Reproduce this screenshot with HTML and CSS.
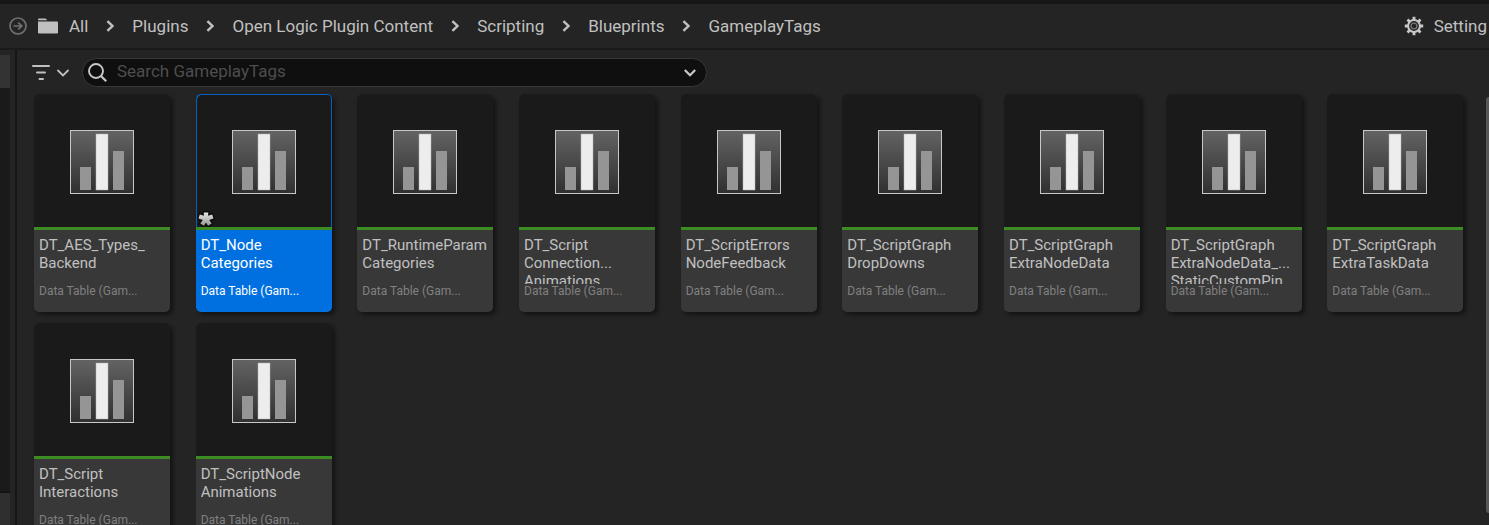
FILE: index.html
```html
<!DOCTYPE html>
<html lang="en">
<head>
<meta charset="utf-8">
<title>Content Browser</title>
<link rel="stylesheet" href="styles.css">
</head>
<body>
<svg class="defs" width="0" height="0" aria-hidden="true">
  <defs>
    <linearGradient id="plate" x1="0" y1="0" x2="0" y2="1">
      <stop offset="0" stop-color="#636363"/><stop offset="1" stop-color="#303030"/>
    </linearGradient>
    <linearGradient id="star" x1="0" y1="0" x2="0" y2="1">
      <stop offset="0" stop-color="#e6e6e6"/><stop offset="1" stop-color="#979797"/>
    </linearGradient>
    <symbol id="table" viewBox="0 0 64 64">
      <rect x=".5" y=".5" width="63" height="63" fill="url(#plate)" stroke="#c8c8c8"/>
      <rect x="10" y="37" width="11" height="23" fill="#959595"/>
      <rect x="26" y="4" width="12" height="56" fill="#ededed" stroke="#b5b5b5" stroke-width=".5"/>
      <rect x="43" y="21" width="11" height="39" fill="#959595"/>
    </symbol>
    <symbol id="chevron" viewBox="0 0 8 12">
      <path d="M1.4 1.2 6.4 6l-5 4.8" fill="none" stroke="#c0c0c0" stroke-width="2.4"/>
    </symbol>
  </defs>
</svg>
<div class="app">
  <header class="topbar">
    <button class="icon-button" aria-label="Forward">
      <svg width="18" height="18" viewBox="0 0 18 18" fill="none" stroke="#707070" stroke-width="1.7"><circle cx="9" cy="9" r="8"/><path d="M4.500 9h8M9.200 5.600 12.800 9l-3.600 3.400"/></svg>
    </button>
    <svg class="folder" width="20" height="16" viewBox="0 0 20 16" fill="#c0c0c0"><path d="M0 2.200V1.500Q0 .5 1 .5h6.500L9.500 2.200z"/><path d="M0 3.500h19q1 0 1 1V14.500q0 1-1 1H1q-1 0-1-1z"/></svg>
    <nav class="crumbs" aria-label="Path">
      <a href="#">All</a>
      <svg class="sep" width="8" height="12"><use href="#chevron"/></svg>
      <a href="#">Plugins</a>
      <svg class="sep" width="8" height="12"><use href="#chevron"/></svg>
      <a href="#">Open Logic Plugin Content</a>
      <svg class="sep" width="8" height="12"><use href="#chevron"/></svg>
      <a href="#">Scripting</a>
      <svg class="sep" width="8" height="12"><use href="#chevron"/></svg>
      <a href="#">Blueprints</a>
      <svg class="sep" width="8" height="12"><use href="#chevron"/></svg>
      <a href="#">GameplayTags</a>
    </nav>
    <button class="settings">
      <svg width="20" height="20" viewBox="0 0 20 20" fill="none" stroke="#c8c8c8"><circle cx="10" cy="10" r="5.900" stroke-width="2"/><circle cx="10" cy="10" r="2.900" stroke="#777" stroke-width="1.300"/><path stroke-width="2.800" d="M10 .8v3.400M10 15.800v3.400M.8 10h3.400M15.800 10h3.400M3.500 3.500l2.200 2.200M14.300 14.300l2.200 2.200M3.500 16.500l2.200-2.200M14.300 5.700l2.200-2.200"/></svg>
      <span>Setting</span>
    </button>
  </header>
  <div class="body">
    <aside class="side"><div class="side-head"></div><div class="side-list"></div><div class="side-foot"></div></aside>
    <main class="content">
      <div class="toolbar">
        <button class="icon-button filter" aria-label="Filters">
          <svg width="37" height="16" viewBox="0 0 37 16" fill="none" stroke="#c0c0c0" stroke-width="2" stroke-linecap="round"><path d="M1 1h16M5 7.500h8M7.500 14h3.500"/><path d="m26 5.500 5 5 5-5" stroke-width="1.800"/></svg>
        </button>
        <div class="search">
          <svg width="19" height="19" viewBox="0 0 19 19" fill="none" stroke="#c8c8c8" stroke-width="1.900"><circle cx="8" cy="8" r="7"/><path d="m13 13 5.200 5.200" stroke-width="2.200"/></svg>
          <input type="text" placeholder="Search GameplayTags" aria-label="Search GameplayTags">
          <button class="icon-button" aria-label="Search options"><svg width="12" height="8" viewBox="0 0 12 8" fill="none" stroke="#c8c8c8" stroke-width="2.300"><path d="m.8 1 5.200 5.200L11.200 1"/></svg></button>
        </div>
      </div>
      <div class="grid">
        <article class="card"><div class="thumb"><svg width="64" height="64"><use href="#table"/></svg></div><div class="info"><h2>DT_AES_Types_<br>Backend</h2><p>Data Table (Gam...</p></div></article>
        <article class="card selected"><div class="thumb"><svg width="64" height="64"><use href="#table"/></svg><svg class="dirty" width="18" height="16" viewBox="0 0 18 16"><path fill="url(#star)" stroke="#0c0c0c" stroke-width="3" paint-order="stroke" stroke-linejoin="round" d="M6.700 1.500h4.600L11 4.800l4.200-1.200 1.300 4-4.300 1.300 2.500 3.600-3.600 2.300L9 11.600l-2.100 3.200-3.600-2.300 2.500-3.600-4.300-1.300 1.300-4L7 4.800z"/></svg></div><div class="info"><h2>DT_Node<br>Categories</h2><p>Data Table (Gam...</p></div></article>
        <article class="card"><div class="thumb"><svg width="64" height="64"><use href="#table"/></svg></div><div class="info"><h2>DT_RuntimeParam<br>Categories</h2><p>Data Table (Gam...</p></div></article>
        <article class="card"><div class="thumb"><svg width="64" height="64"><use href="#table"/></svg></div><div class="info"><h2>DT_Script<br>Connection...<br>Animations</h2><p>Data Table (Gam...</p></div></article>
        <article class="card"><div class="thumb"><svg width="64" height="64"><use href="#table"/></svg></div><div class="info"><h2>DT_ScriptErrors<br>NodeFeedback</h2><p>Data Table (Gam...</p></div></article>
        <article class="card"><div class="thumb"><svg width="64" height="64"><use href="#table"/></svg></div><div class="info"><h2>DT_ScriptGraph<br>DropDowns</h2><p>Data Table (Gam...</p></div></article>
        <article class="card"><div class="thumb"><svg width="64" height="64"><use href="#table"/></svg></div><div class="info"><h2>DT_ScriptGraph<br>ExtraNodeData</h2><p>Data Table (Gam...</p></div></article>
        <article class="card"><div class="thumb"><svg width="64" height="64"><use href="#table"/></svg></div><div class="info"><h2>DT_ScriptGraph<br>ExtraNodeData_...<br>StaticCustomPin</h2><p>Data Table (Gam...</p></div></article>
        <article class="card"><div class="thumb"><svg width="64" height="64"><use href="#table"/></svg></div><div class="info"><h2>DT_ScriptGraph<br>ExtraTaskData</h2><p>Data Table (Gam...</p></div></article>
        <article class="card"><div class="thumb"><svg width="64" height="64"><use href="#table"/></svg></div><div class="info"><h2>DT_Script<br>Interactions</h2><p>Data Table (Gam...</p></div></article>
        <article class="card"><div class="thumb"><svg width="64" height="64"><use href="#table"/></svg></div><div class="info"><h2>DT_ScriptNode<br>Animations</h2><p>Data Table (Gam...</p></div></article>
      </div>
      <div class="scrollbar"></div>
    </main>
  </div>
</div>
</body>
</html>
```
FILE: styles.css
```css
* { box-sizing: border-box; }
body {
  margin: 0;
  background: #242424;
  color: #c0c0c0;
  font-family: Roboto, "Liberation Sans", sans-serif;
}
.defs { position: absolute; }
.app { display: flex; flex-direction: column; height: 100vh; overflow: hidden; }
button { background: none; border: 0; padding: 0; color: inherit; font: inherit; }
.icon-button { display: flex; align-items: center; }

.topbar {
  display: flex;
  align-items: center;
  flex: none;
  height: 50px;
  padding-left: 9px;
  border-top: 4px solid #161616;
  border-bottom: 2px solid #1a1a1a;
  font-size: 17px;
  line-height: 20px;
  white-space: nowrap;
}
.folder { margin-left: 11px; }
.crumbs { display: flex; align-items: center; gap: 18px; margin-left: 11px; }
.crumbs a { color: inherit; text-decoration: none; }
.sep { flex: none; }
.settings { display: flex; align-items: center; gap: 10px; margin-left: auto; padding-right: 2px; }

.body { display: flex; flex: 1; min-height: 0; }
.side {
  display: flex;
  flex-direction: column;
  flex: none;
  width: 17px;
  padding: 5px 5px 0 0;
  border-right: 2px solid #161616;
}
.side-head { height: 33px; background: #333; }
.side-list { flex: 1; background: #1a1a1a; border-bottom: 2px solid #141414; }
.side-foot { height: 32px; background: #2f2f2f; }

.content { position: relative; flex: 1; min-width: 0; padding: 8px 0 0 17px; overflow: hidden; }
.toolbar { display: flex; align-items: center; gap: 13px; margin-left: -2px; }
.search {
  display: flex;
  align-items: center;
  flex: 1;
  max-width: 625px;
  height: 29px;
  padding: 0 10px 0 5px;
  background: #0f0f0f;
  border: 1px solid #383838;
  border-radius: 15px;
}
.search input {
  flex: 1;
  min-width: 0;
  height: 26px;
  padding: 0 0 3px;
  margin-left: 10px;
  background: none;
  border: 0;
  outline: 0;
  color: #c0c0c0;
  font: 17px/20px Roboto, sans-serif;
}
.search input::placeholder { color: #4d4d4d; opacity: 1; }

.grid {
  display: grid;
  grid-template-columns: repeat(auto-fill, minmax(150px, 1fr));
  row-gap: 11px;
  margin-top: 7px;
}
.card {
  width: 136px;
  height: 218px;
  border-radius: 5px;
  background: #383838;
  box-shadow: 3px 3px 4px rgba(0, 0, 0, .45);
  overflow: hidden;
}
.thumb {
  position: relative;
  display: flex;
  align-items: center;
  justify-content: center;
  height: 136px;
  background: #1a1a1a;
  border-bottom: 3px solid #3d8b23;
  padding-top: 3px;
}
.info { padding: 6px 0 0 5px; }
.info h2 {
  height: 48px;
  margin: 0;
  overflow: hidden;
  font-size: 15px;
  font-weight: 400;
  line-height: 18px;
  white-space: nowrap;
}
.info p { margin: 0; color: #808080; font-size: 12px; line-height: 14px; }
.selected { background: #0070e0; color: #fff; }
.selected .info p { color: #fff; }
.selected .thumb {
  box-shadow: inset 1px 1px #0560bd, inset -1px 0 #0560bd;
  border-radius: 5px 5px 0 0;
}
.dirty { position: absolute; left: 1px; bottom: 0; }
.scrollbar {
  position: absolute;
  top: 47px;
  right: 0;
  bottom: 12px;
  width: 3px;
  background: #575757;
  border-radius: 3px 0 0 3px;
}
```
